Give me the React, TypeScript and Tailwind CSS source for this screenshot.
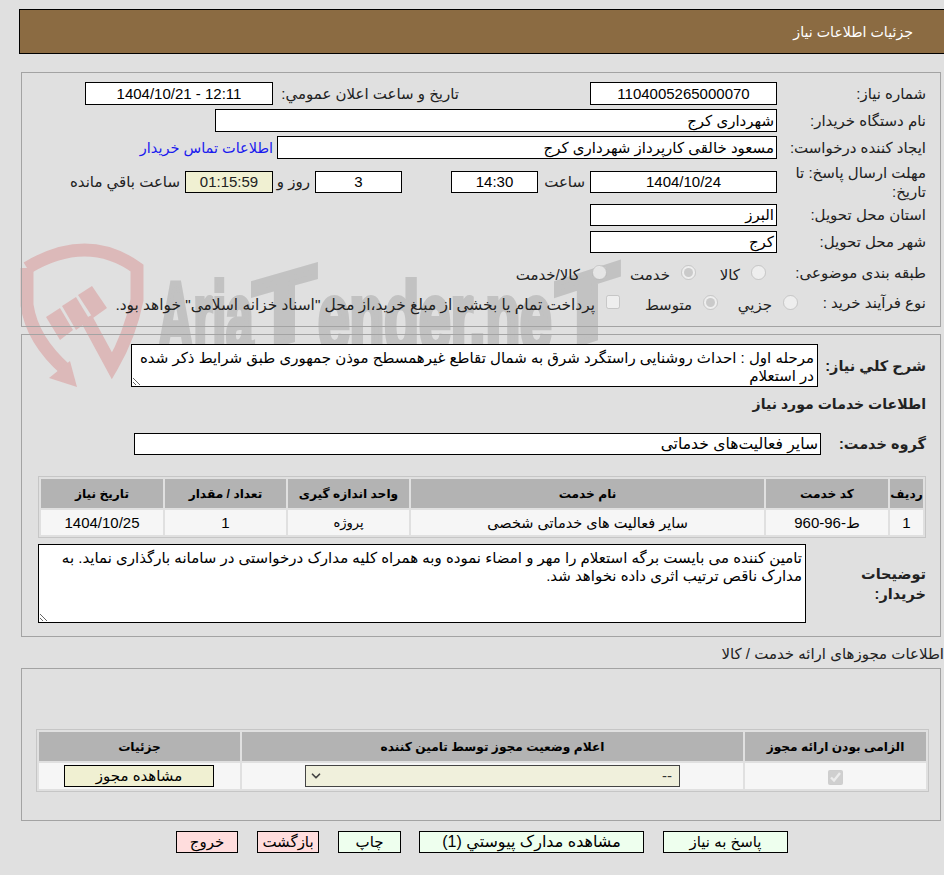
import { ChevronDown } from 'lucide-react';

const field = "bg-white border border-black flex items-center justify-center text-black";
const fieldRight = "bg-white border border-black flex items-center px-[2px] text-black";
const th = "bg-[#b3b3b3] font-bold text-[12.2px] h-[29px] text-center text-black p-0";
const td = "bg-[#f6f6f6] h-[25px] text-center text-black p-0";

function Watermark() {
  const letter = { fontFamily: 'Liberation Sans', fontWeight: 700, fontSize: 98, fill: '#c2c2c2', stroke: '#c2c2c2', strokeWidth: 6 };
  return (
    <svg className="absolute left-0 top-0 -z-10 pointer-events-none [direction:ltr]" width="944" height="875" viewBox="0 0 944 875" fill="none">
      <path d="M27 268 Q87 232 137 268 L137 300 Q130 335 112 366 L86 318" stroke="#dcb9b9" strokeWidth="13" />
      <path d="M27 268 L27 305 Q32 340 66 370" stroke="#dcb9b9" strokeWidth="13" />
      <polygon points="70,361 77,387 49,378" fill="#dcb9b9" />
      <polygon points="46,317 60,308 73,330 60,340" fill="#dcb9b9" />
      <polygon points="62,306 76,297 90,320 76,330" fill="#dcb9b9" />
      <polygon points="78,295 92,286 107,308 93,318" fill="#dcb9b9" />
      <text {...letter} transform="translate(158,351) scale(0.5,1)">Aria</text>
      <text {...letter} transform="translate(253,351) skewY(-16) scale(1.05,1)">T</text>
      <text {...letter} transform="translate(318,351) scale(0.58,1)">ender.ne</text>
      <text {...letter} transform="translate(556,351) skewY(-18) scale(1.05,1)">T</text>
    </svg>
  );
}

function Radio({ checked = false }: { checked?: boolean }) {
  return <input type="radio" disabled checked={checked} readOnly className="w-[15px] h-[15px] m-0 mb-[2px]" />;
}

export default function App() {
  return (
    <div dir="rtl" className="relative z-0 w-[944px] h-[875px] overflow-hidden bg-[#e0e0e0] text-[15px] leading-[18px] text-[#111] font-['Liberation_Sans','DejaVu_Sans',sans-serif]">
      <Watermark />

      {/* header */}
      <div className="pt-[9px] pl-[19px]">
        <div className="h-[45px] bg-[#8b6b42] border border-black border-r-0 flex items-center pr-[31px] text-white text-[14.2px]">جزئیات اطلاعات نیاز</div>
      </div>

      {/* main panel */}
      <div className="ml-[21px] mr-[3px] mt-[18px] h-[255px] border border-[#a3a3a3] pt-[9px] text-[#222]">
        <div className="flex items-center h-[23px]">
          <div className="w-[163px] pr-[14px]">شماره نیاز:</div>
          <div className={`${field} w-[187px] h-[23px]`}>1104005265000070</div>
          <div className="w-[182px] mr-[131px] whitespace-nowrap">تاریخ و ساعت اعلان عمومي:</div>
          <div dir="ltr" className={`${field} w-[188px] h-[23px] mr-[4px]`}>1404/10/21 - 12:11</div>
        </div>
        <div className="flex items-center h-[23px] mt-[4px]">
          <div className="w-[163px] pr-[14px]">نام دستگاه خریدار:</div>
          <div className={`${fieldRight} w-[562px] h-[23px]`}>شهرداری کرج</div>
        </div>
        <div className="flex items-center h-[23px] mt-[4px]">
          <div className="w-[163px] pr-[14px] whitespace-nowrap">ایجاد کننده درخواست:</div>
          <div className={`${fieldRight} w-[500px] h-[23px]`}>مسعود خالقی کارپرداز شهرداری کرج</div>
          <a className="mr-[4px] text-[#1a1aee] text-[14.5px]">اطلاعات تماس خریدار</a>
        </div>
        <div className="flex items-center h-[36px] mt-[5px]">
          <div className="w-[163px] pr-[14px] leading-[19px]">مهلت ارسال پاسخ: تا تاریخ:</div>
          <div className={`${field} w-[187px] h-[22px]`}>1404/10/24</div>
          <div className="w-[52px] pr-[5px]">ساعت</div>
          <div className={`${field} w-[87px] h-[22px]`}>14:30</div>
          <div className={`${field} w-[87px] h-[22px] mr-[49px]`}>3</div>
          <div className="w-[42px] pr-[5px]">روز و</div>
          <div className="h-[22px] w-[88px] border border-black bg-[#f0f0d2] flex items-center justify-center">01:15:59</div>
          <div className="pr-[5px] whitespace-nowrap">ساعت باقي مانده</div>
        </div>
        <div className="flex items-center h-[22px] mt-[4px]">
          <div className="w-[163px] pr-[14px]">استان محل تحویل:</div>
          <div className={`${fieldRight} w-[187px] h-[22px]`}>البرز</div>
        </div>
        <div className="flex items-center h-[22px] mt-[5px]">
          <div className="w-[163px] pr-[14px]">شهر محل تحویل:</div>
          <div className={`${fieldRight} w-[187px] h-[22px]`}>کرج</div>
        </div>
        <div className="flex items-center h-[20px] mt-[10px]">
          <div className="w-[174px] pr-[14px] whitespace-nowrap">طبقه بندی موضوعی:</div>
          <Radio />
          <div className="w-[55px] pr-[11px] pt-[4px]">کالا</div>
          <Radio checked />
          <div className="w-[74px] pr-[11px] pt-[4px]">خدمت</div>
          <Radio />
          <div className="pr-[12px] pt-[4px]">کالا/خدمت</div>
        </div>
        <div className="flex items-center h-[20px] mt-[10px]">
          <div className="w-[142px] pr-[14px] whitespace-nowrap">نوع فرآیند خرید :</div>
          <Radio />
          <div className="w-[65px] pr-[11px] pt-[4px]">جزيي</div>
          <Radio checked />
          <div className="w-[83px] pr-[11px] pt-[4px]">متوسط</div>
          <input type="checkbox" disabled className="w-[14px] h-[14px] m-0 mb-[2px]" />
          <div className="pr-[11px] pt-[4px] whitespace-nowrap text-[15.4px]">پرداخت تمام یا بخشی از مبلغ خرید،از محل "اسناد خزانه اسلامی" خواهد بود.</div>
        </div>
      </div>

      {/* need details panel */}
      <div className="ml-[21px] mr-[3px] mt-[7px] h-[303px] border border-[#a3a3a3] pt-[9px] text-[#222]">
        <div className="flex items-center">
          <div className="w-[122px] pr-[14px] font-bold text-[14.5px] whitespace-nowrap">شرح کلي نياز:</div>
          <textarea readOnly dir="rtl" className="w-[687px] h-[43px] bg-white border border-black px-[3px] pt-[4px] pb-0 text-black leading-[18px] outline-none" defaultValue="مرحله اول : احداث روشنایی راستگرد شرق به شمال تقاطع غیرهمسطح موذن جمهوری طبق شرایط ذکر شده در استعلام" />
        </div>
        <div className="pr-[14px] font-bold text-[14.1px] mt-[8px]">اطلاعات خدمات مورد نیاز</div>
        <div className="flex items-center mt-[20px]">
          <div className="w-[119px] pr-[14px] font-bold text-[14.5px]">گروه خدمت:</div>
          <div className={`${fieldRight} w-[687px] h-[22px] text-[15.6px]`}>سایر فعالیت‌های خدماتی</div>
        </div>
        <div className="pl-[16px] pr-[14px] mt-[21px]">
          <table className="w-full table-fixed border-separate border-spacing-[2px] border border-[#c6c6c6] bg-[#e0e0e0]">
            <colgroup>
              <col className="w-[33px]" />
              <col className="w-[122px]" />
              <col className="w-[353px]" />
              <col className="w-[121px]" />
              <col className="w-[121px]" />
              <col />
            </colgroup>
            <thead>
              <tr>
                <th className={th}>ردیف</th>
                <th className={th}>کد خدمت</th>
                <th className={th}>نام خدمت</th>
                <th className={th}>واحد اندازه گیری</th>
                <th className={th}>تعداد / مقدار</th>
                <th className={th}>تاریخ نیاز</th>
              </tr>
            </thead>
            <tbody>
              <tr>
                <td className={td}>1</td>
                <td className={td}>ط-96-960</td>
                <td className={`${td} text-[14.5px]`}>سایر فعالیت های خدماتی شخصی</td>
                <td className={`${td} text-[13px]`}>پروژه</td>
                <td className={td}>1</td>
                <td className={td}>1404/10/25</td>
              </tr>
            </tbody>
          </table>
        </div>
        <div className="flex items-center mt-[6px]">
          <div className="w-[134px] pr-[14px] font-bold text-[14.5px] leading-[20px]">توضیحات خریدار:</div>
          <textarea readOnly dir="rtl" className="w-[768px] h-[79px] bg-white border border-black px-[3px] pt-[4px] pb-0 text-black leading-[18px] outline-none" defaultValue="تامین کننده می بایست برگه استعلام را مهر و امضاء نموده وبه همراه کلیه مدارک درخواستی در سامانه بارگذاری نماید. به مدارک ناقص ترتیب اثری داده نخواهد شد." />
        </div>
      </div>

      <div className="mt-[8px] h-[23px] whitespace-nowrap text-[#222]">اطلاعات مجوزهای ارائه خدمت / کالا</div>

      {/* licenses panel */}
      <div className="ml-[21px] mr-[3px] h-[153px] border border-[#a3a3a3] pt-[60px] pl-[14px] pr-[11px]">
        <table className="w-full table-fixed border-separate border-spacing-[2px] border border-[#c6c6c6]">
          <colgroup>
            <col className="w-[181px]" />
            <col className="w-[501px]" />
            <col />
          </colgroup>
          <thead>
            <tr>
              <th className={th}>الزامی بودن ارائه مجوز</th>
              <th className={th}>اعلام وضعیت مجوز توسط تامین کننده</th>
              <th className={th}>جزئیات</th>
            </tr>
          </thead>
          <tbody>
            <tr>
              <td className={`${td} h-[26px]`}>
                <input type="checkbox" disabled checked readOnly className="w-[15px] h-[15px] m-0 align-middle" />
              </td>
              <td className={`${td} h-[26px]`}>
                <div className="w-[375px] h-[22px] mr-[63px] border border-[#444] bg-[#f0f0dc] flex items-center justify-between pl-[3px] pr-[7px] text-[#333]">
                  <span>--</span>
                  <ChevronDown className="w-[14px] h-[14px] text-[#444]" strokeWidth={3} />
                </div>
              </td>
              <td className={`${td} h-[26px]`}>
                <div className="w-[150px] h-[22px] mr-[26px] border border-black bg-[#f0f0d2] flex items-center justify-center">مشاهده مجوز</div>
              </td>
            </tr>
          </tbody>
        </table>
      </div>

      {/* actions */}
      <div className="flex gap-[19px] pr-[156px] mt-[10px] text-black">
        <button className="w-[125px] h-[22px] border border-black bg-[#eeffee]">پاسخ به نیاز</button>
        <button className="w-[225px] h-[22px] border border-black bg-[#eeffee] text-[16px]">مشاهده مدارک پیوستي (1)</button>
        <button className="w-[63px] h-[22px] mr-[-1px] border border-black bg-[#eeffee]">چاپ</button>
        <button className="w-[62px] h-[22px] border border-black bg-[#ffdddd]">بازگشت</button>
        <button className="w-[62px] h-[22px] border border-black bg-[#ffdddd]">خروج</button>
      </div>
    </div>
  );
}
